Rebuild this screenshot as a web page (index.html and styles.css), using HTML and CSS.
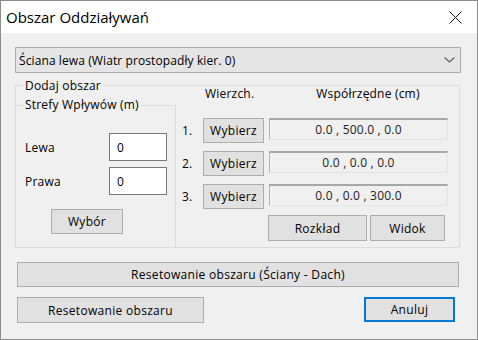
FILE: index.html
```html
<!DOCTYPE html>
<html lang="pl">
<head>
  <meta charset="UTF-8">
  <title>Obszar Oddziaływań</title>
  <link rel="stylesheet" href="styles.css">
</head>
<body>
  <div class="window">
    <div class="titlebar">
      <span class="title">Obszar Oddziaływań</span>
      <svg class="close" width="13" height="13" viewBox="0 0 13 13">
        <path d="M0.5 0.5 L12.5 12.5 M12.5 0.5 L0.5 12.5" stroke="#111" stroke-width="1" fill="none"/>
      </svg>
    </div>
    <div class="content">
      <div class="combo">
        <span>Ściana lewa (Wiatr prostopadły kier. 0)</span>
        <svg class="chevron" width="11" height="6" viewBox="0 0 11 6">
          <path d="M0.5 0.5 L5.5 5 L10.5 0.5" stroke="#606060" stroke-width="1.2" fill="none"/>
        </svg>
      </div>

      <div class="group outer">
        <div class="group-title">Dodaj obszar</div>
        <div class="group-body">
          <div class="group zones">
            <div class="group-title">Strefy Wpływów (m)</div>
            <div class="field-row first">
              <label class="field-label">Lewa</label>
              <input class="edit" type="text" value="0">
            </div>
            <div class="field-row">
              <label class="field-label">Prawa</label>
              <input class="edit" type="text" value="0">
            </div>
            <button class="btn pick">Wybór</button>
          </div>

          <div class="vertices">
            <div class="vert-head">
              <span class="head-vert">Wierzch.</span>
              <span class="head-coords">Współrzędne (cm)</span>
            </div>
            <div class="vert-rows">
              <div class="vert-row">
                <span class="num">1.</span>
                <button class="btn choose">Wybierz</button>
                <div class="coords">0.0 , 500.0 , 0.0</div>
              </div>
              <div class="vert-row">
                <span class="num">2.</span>
                <button class="btn choose">Wybierz</button>
                <div class="coords">0.0 , 0.0 , 0.0</div>
              </div>
              <div class="vert-row">
                <span class="num">3.</span>
                <button class="btn choose">Wybierz</button>
                <div class="coords">0.0 , 0.0 , 300.0</div>
              </div>
            </div>
            <div class="vert-actions">
              <button class="btn layout">Rozkład</button>
              <button class="btn view">Widok</button>
            </div>
          </div>
        </div>
      </div>

      <button class="btn reset-all">Resetowanie obszaru (Ściany - Dach)</button>
      <div class="footer">
        <button class="btn reset">Resetowanie obszaru</button>
        <button class="btn cancel">Anuluj</button>
      </div>
    </div>
  </div>
</body>
</html>
```

FILE: styles.css
```css
* {
  box-sizing: border-box;
}

body {
  margin: 0;
  padding: 0;
  font-family: 'Open Sans', 'Noto Sans', sans-serif;
  font-size: 12px;
  letter-spacing: 0.2px;
  color: #000;
  background: #fff;
}

.window {
  width: 478px;
  height: 340px;
  border: 1px solid #8c8c8c;
  background: #f0f0f0;
  display: flex;
  flex-direction: column;
}

.titlebar {
  height: 32px;
  background: #fff;
  display: flex;
  align-items: center;
  justify-content: space-between;
  padding: 0 15px 0 5px;
}

.title {
  font-size: 15px;
  letter-spacing: 0;
  color: #000;
}

.close {
  display: block;
}

.content {
  padding: 0 0 0 14px;
}

.combo {
  margin-top: 14px;
  width: 446px;
  height: 26px;
  background: #e5e5e5;
  border: 1px solid #adadad;
  display: flex;
  align-items: center;
  justify-content: space-between;
  padding: 0 5px 0 3px;
  letter-spacing: 0.1px;
}

.chevron {
  display: block;
}

.group {
  border: 1px solid #dcdcdc;
}

.group-title {
  width: max-content;
  line-height: 16px;
  height: 16px;
  padding: 0 2px;
  background: #f0f0f0;
}

.outer {
  margin-top: 12px;
  width: 445px;
  height: 163px;
  display: flex;
  flex-direction: column;
}

.outer > .group-title {
  margin: -8px 0 0 7px;
}

.group-body {
  flex: 1;
  display: flex;
}

.zones {
  width: 160px;
  margin-top: 11px;
  border-left: none;
  border-bottom: none;
}

.zones > .group-title {
  margin: -9px 0 0 7px;
}

.field-row {
  display: flex;
  align-items: center;
  margin-top: 6px;
  padding-left: 9px;
}

.field-row.first {
  margin-top: 20px;
}

.field-label {
  width: 37px;
  overflow: hidden;
  white-space: nowrap;
}

.edit {
  margin-left: 47px;
  width: 58px;
  height: 28px;
  border: 1px solid #7a7a7a;
  background: #fff;
  font: inherit;
  padding: 0 0 0 7px;
  outline: none;
}

.btn {
  font: inherit;
  letter-spacing: 0.3px;
  color: #000;
  background: #e1e1e1;
  border: 1px solid #adadad;
  padding: 0;
  height: 25px;
}

.pick {
  display: block;
  margin: 14px 0 0 35px;
  width: 72px;
}

.vertices {
  flex: 1;
  padding-left: 6px;
}

.vert-head {
  margin-top: -8px;
  height: 16px;
  line-height: 16px;
  display: flex;
}

.head-vert {
  width: 87px;
  padding-left: 23px;
}

.head-coords {
  width: 179px;
  text-align: center;
  padding-left: 19px;
}

.vert-rows {
  margin-top: 16px;
  display: flex;
  flex-direction: column;
  gap: 8px;
}

.vert-row {
  display: flex;
  align-items: center;
  height: 25px;
}

.num {
  width: 21px;
}

.choose {
  width: 61px;
}

.coords {
  align-self: flex-start;
  margin-left: 5px;
  width: 179px;
  height: 22px;
  line-height: 19px;
  text-align: center;
  background: #f0f0f0;
  border: 1px solid #e3e3e3;
  border-top: 2px solid #a8a8a8;
  border-left-color: #b4b4b4;
  color: #222;
}

.vert-actions {
  margin: 6px 0 0 86px;
  display: flex;
  gap: 3px;
}

.layout {
  width: 99px;
  height: 26px;
}

.view {
  width: 75px;
  height: 26px;
}

.reset-all {
  display: block;
  margin: 14px 0 0 2px;
  width: 442px;
}

.footer {
  margin: 10px 0 0 2px;
  width: 438px;
  display: flex;
  justify-content: space-between;
}

.reset {
  width: 187px;
  height: 26px;
}

.cancel {
  width: 91px;
  height: 25px;
  border: 2px solid #0078d7;
}
```
